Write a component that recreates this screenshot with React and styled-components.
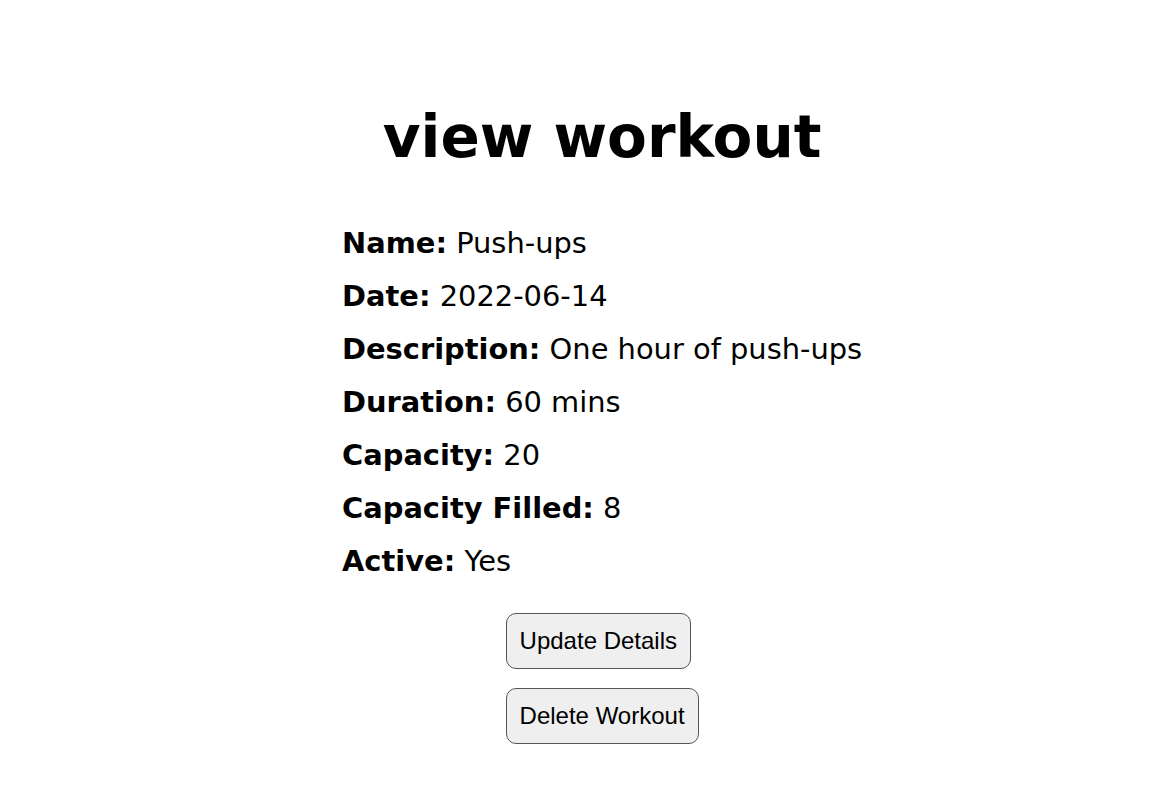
import React from "react";
import styled, { createGlobalStyle } from "styled-components";

const GlobalStyle = createGlobalStyle`
  body {
    margin: 0;
    background: #ffffff;
    color: #000000;
    font-family: "DejaVu Sans", Verdana, sans-serif;
  }
`;

const Page = styled.main`
  display: flex;
  padding: 104px 0 40px 342px;
`;

const Card = styled.section`
  display: flex;
  flex-direction: column;
  align-items: center;
`;

const Title = styled.h1`
  margin: 0 0 56px;
  font-size: 58px;
  line-height: 67px;
  font-weight: bold;
`;

const Details = styled.div`
  align-self: stretch;
  display: flex;
  flex-direction: column;
  gap: 20px;
`;

const Row = styled.p`
  margin: 0;
  font-size: 28.9px;
  line-height: 33px;
  white-space: nowrap;
`;

const Label = styled.strong`
  font-weight: bold;
`;

const Buttons = styled.div`
  display: flex;
  flex-direction: column;
  align-items: flex-start;
  gap: 19px;
  margin-top: 35px;
`;

const Button = styled.button`
  font-family: "Liberation Sans", Arial, sans-serif;
  font-size: 24px;
  line-height: 28px;
  padding: 13px 13px;
  color: #000;
  background: #efefef;
  border: 1px solid #555;
  border-radius: 10px;
  cursor: pointer;
`;

const workout = [
  ["Name", "Push-ups"],
  ["Date", "2022-06-14"],
  ["Description", "One hour of push-ups"],
  ["Duration", "60 mins"],
  ["Capacity", "20"],
  ["Capacity Filled", "8"],
  ["Active", "Yes"],
];

export default function App() {
  return (
    <>
      <GlobalStyle />
      <Page>
        <Card>
          <Title>view workout</Title>
          <Details>
            {workout.map(([label, value]) => (
              <Row key={label}>
                <Label>{label}:</Label> {value}
              </Row>
            ))}
          </Details>
          <Buttons>
            <Button>Update Details</Button>
            <Button>Delete Workout</Button>
          </Buttons>
        </Card>
      </Page>
    </>
  );
}
